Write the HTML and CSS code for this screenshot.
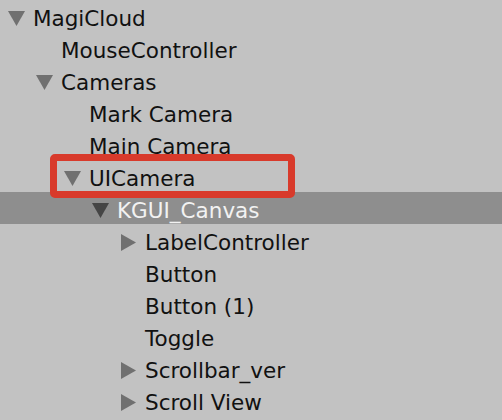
FILE: index.html
```html
<!DOCTYPE html>
<html>
<head>
<meta charset="utf-8">
<link rel="stylesheet" href="styles.css">
</head>
<body>
<div class="tree">
  <div class="row l0"><svg class="tri" viewBox="0 0 17 17"><polygon points="0,1 17,1 8.5,16"/></svg><span>MagiCloud</span></div>
  <div class="row l1"><span class="tri"></span><span>MouseController</span></div>
  <div class="row l1"><svg class="tri" viewBox="0 0 17 17"><polygon points="0,1 17,1 8.5,16"/></svg><span>Cameras</span></div>
  <div class="row l2"><span class="tri"></span><span>Mark Camera</span></div>
  <div class="row l2"><span class="tri"></span><span>Main Camera</span></div>
  <div class="row l2"><svg class="tri" viewBox="0 0 17 17"><polygon points="0,1 17,1 8.5,16"/></svg><span>UICamera</span></div>
  <div class="row l3 sel"><svg class="tri" viewBox="0 0 17 17"><polygon points="0,1 17,1 8.5,16"/></svg><span>KGUI_Canvas</span></div>
  <div class="row l4"><svg class="tri" viewBox="0 0 17 17"><polygon points="1,0 16,8.5 1,17"/></svg><span>LabelController</span></div>
  <div class="row l4"><span class="tri"></span><span>Button</span></div>
  <div class="row l4"><span class="tri"></span><span>Button (1)</span></div>
  <div class="row l4"><span class="tri"></span><span>Toggle</span></div>
  <div class="row l4"><svg class="tri" viewBox="0 0 17 17"><polygon points="1,0 16,8.5 1,17"/></svg><span>Scrollbar_ver</span></div>
  <div class="row l4"><svg class="tri" viewBox="0 0 17 17"><polygon points="1,0 16,8.5 1,17"/></svg><span>Scroll View</span></div>
  <div class="highlight"></div>
</div>
</body>
</html>
```
FILE: styles.css
```css
html, body {
  margin: 0;
  padding: 0;
  background: #c2c2c2;
  overflow: hidden;
}
.tree {
  position: relative;
  width: 502px;
  height: 420px;
  font-family: "DejaVu Sans", sans-serif;
  font-size: 21.5px;
  color: #111;
}
.row {
  box-sizing: border-box;
  height: 32px;
  padding-top: 4px;
  display: flex;
  align-items: center;
  white-space: nowrap;
}
.tri {
  width: 17px;
  height: 17px;
  flex: none;
  margin-right: 8px;
  fill: #707070;
}
.l0 { padding-left: 8px; }
.l1 { padding-left: 36px; }
.l2 { padding-left: 64px; }
.l3 { padding-left: 92px; }
.l4 { padding-left: 120px; }
.sel {
  background: #8e8e8e;
  color: #f2f2f2;
}
.sel .tri { fill: #454545; }
.highlight {
  position: absolute;
  left: 50px;
  top: 154px;
  width: 231px;
  height: 30px;
  border: 7px solid #d83a2b;
  border-radius: 5px;
}
```
